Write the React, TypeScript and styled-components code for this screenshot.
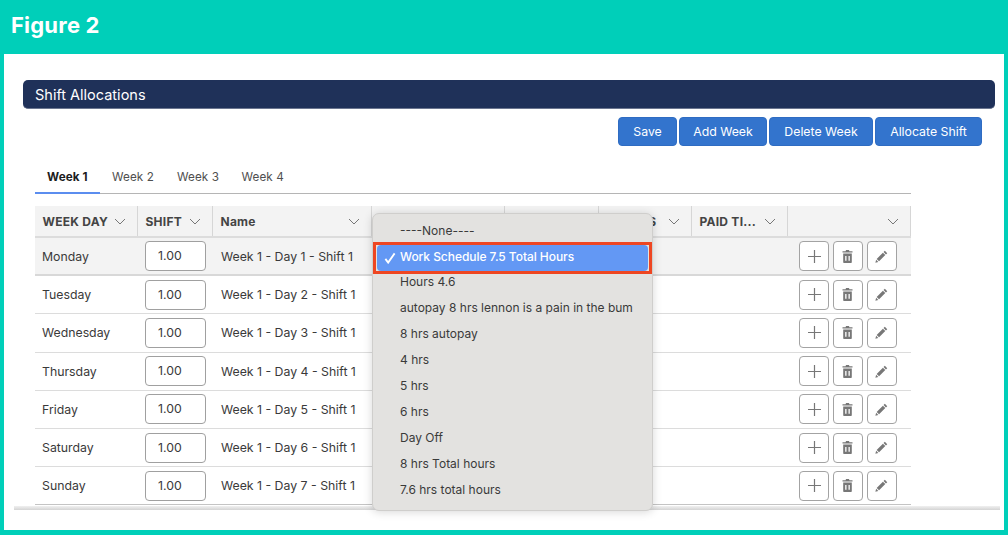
import React from "react";
import styled, { createGlobalStyle } from "styled-components";

const Global = createGlobalStyle`
  html, body { margin: 0; padding: 0; }
  body { background: #00cfb9; font-family: Inter, "Liberation Sans", sans-serif; }
  * { box-sizing: border-box; }
`;
const Page = styled.div`
  width: 1008px; height: 535px; overflow: hidden; background: #00cfb9;
  display: flex; flex-direction: column;
`;
const FigureHeader = styled.h1`
  margin: 0; height: 54px; flex: none; padding: 11px 0 0 11px;
  color: #fff; font: 700 22px/28px Inter, "Liberation Sans", sans-serif; letter-spacing: 0.2px;
`;
const Panel = styled.main`
  position: relative; height: 476px; margin: 0 4px; background: #fff; flex: none;
  padding: 26px 9px 0 19px; display: flex; flex-direction: column;
`;
const TitleBar = styled.div`
  height: 29px; background: #1f3159; border-radius: 5px; border-bottom: 1px solid #6b7690;
  color: #fff; font-size: 14.5px; line-height: 30px; padding-left: 12px; flex: none;
`;
const Actions = styled.div`
  display: flex; gap: 2px; justify-content: flex-end; margin-top: 8px; padding-right: 13px; flex: none;
`;
const ActionButton = styled.button<{ $w: number }>`
  width: ${p => p.$w}px; height: 29px; background: #3374cd; color: #fff; border: 1px solid #2f6cc2;
  border-radius: 4px; font: 400 12.3px Inter, "Liberation Sans", sans-serif; padding: 0;
`;
const Tabs = styled.div`
  margin: 15px 0 0 12px; width: 876px; height: 33px; border-bottom: 1px solid #b5b5b5;
  display: flex; flex: none;
`;
const Tab = styled.div<{ $active?: boolean; $w: number }>`
  width: ${p => p.$w}px; height: 33px; padding: 7.5px 0 0 12px; font-size: 11.7px; line-height: 16px;
  letter-spacing: 0.1px;
  color: ${p => (p.$active ? "#1c1c1c" : "#4f4f4f")}; font-weight: ${p => (p.$active ? 700 : 400)};
  border-bottom: ${p => (p.$active ? "2px solid #5b8def" : "none")};
`;
const Cols = "103px 75px 159px 133px 94px 93px 96px 123px";
const Table = styled.div`
  margin: 12px 0 0 12px; width: 876px; flex: none;
`;
const HeadRow = styled.div`
  display: grid; grid-template-columns: ${Cols}; height: 32px; background: #f3f3f3;
  border-bottom: 2px solid #dcdcdc;
`;
const HeadCell = styled.div`
  display: flex; align-items: center; justify-content: space-between; padding: 0 11px 0 7.5px;
  border-right: 1px solid #d6d6d6; font-size: 12px; font-weight: 700; color: #444; white-space: nowrap;
  letter-spacing: 0.25px;
  svg { flex: none; }
`;
const Row = styled.div<{ $active?: boolean }>`
  display: grid; grid-template-columns: ${Cols}; height: 38.2px; align-items: center;
  background: ${p => (p.$active ? "#f3f3f3" : "#fff")};
  border-bottom: ${p => (p.$active ? "2px solid #d8d8d8" : "1px solid #dcdcdc")};
  font-size: 12.3px; color: #3a3a3a;
  &:last-child { border-bottom-color: #c4c4c4; }
`;
const DayCell = styled.div`
  padding-left: 7px; white-space: nowrap; overflow: hidden;
`;
const NameCell = styled.div`
  padding-left: 8px; white-space: nowrap; overflow: hidden;
`;
const ShiftCell = styled.div`
  padding-left: 7px;
`;
const ShiftInput = styled.div`
  width: 61px; height: 30px; background: #fff; border: 1px solid #a0a0a0; border-radius: 4px;
  font-size: 12.3px; line-height: 28px; padding-left: 12px; color: #3a3a3a;
`;
const IconCell = styled.div`
  display: flex; gap: 3.5px; padding-left: 11px; grid-column: 8;
`;
const IconButton = styled.div`
  width: 30.3px; height: 30px; background: #fff; border: 1px solid #a3a3a3; border-radius: 4px;
  display: flex; align-items: center; justify-content: center;
`;
const BottomLine = styled.div`
  position: absolute; left: 10px; width: 986px; top: 452px; height: 3.5px;
  background: linear-gradient(#f0f0f0, #d4d4d4);
`;
const Popup = styled.div`
  position: absolute; left: 368px; top: 159px; width: 281px; height: 298px; background: #e3e2e0;
  border: 1px solid #cfcecc; border-radius: 7px; box-shadow: 0 1px 10px rgba(0,0,0,.16);
  padding-top: 4px; font-size: 12px; color: #3a3a3a;
`;
const Option = styled.div`
  height: 25.9px; line-height: 25.9px; padding-left: 27px; white-space: nowrap;
`;
const Selected = styled.div`
  position: relative; z-index: 1; height: 32px; width: 279px; margin: -2px 0 -4.5px;
  border: 3px solid #ee4622; padding: 0 1px;
`;
const SelectedInner = styled.div`
  height: 26px; background: #6398f4; border-radius: 4px; color: #fff; font-weight: 500; line-height: 23px;
  padding-left: 23px; white-space: nowrap; letter-spacing: -0.05px;
`;
const Check = styled.svg`
  position: absolute; left: 8px; top: 7.5px;
`;

const Chevron = () => (
  <svg width="12" height="7" viewBox="0 0 12 7" fill="none" stroke="#777" strokeWidth="1">
    <path d="M1 1l5 5 5-5" />
  </svg>
);
const Plus = () => (
  <svg width="13" height="13" viewBox="0 0 13 13" stroke="#777" strokeWidth="1.2">
    <path d="M6.5 0v13M0 6.5h13" />
  </svg>
);
const Trash = () => (
  <svg width="11" height="13" viewBox="0 0 11 13" fill="#777">
    <path d="M4 0h3l.4 1.3h3.1v1.2H.5V1.3h3.1z" />
    <path fillRule="evenodd" d="M1.2 3.5h8.6v8.4c0 .6-.4 1.1-1 1.1H2.2c-.6 0-1-.5-1-1.1zM3.2 6v4.8h1.3V6zm3.3 0v4.8h1.3V6z" />
  </svg>
);
const Pencil = () => (
  <svg width="13" height="13" viewBox="0 0 14 14" fill="#777">
    <path d="M10.6.8l2.6 2.6-1.4 1.4-2.6-2.6zM8.5 2.9l2.6 2.6-6.7 6.7-2.6-2.6zM1.2 10.4l2.4 2.4-3.2.8z" />
  </svg>
);

const days = ["Monday", "Tuesday", "Wednesday", "Thursday", "Friday", "Saturday", "Sunday"];
const heads = ["WEEK DAY", "SHIFT", "Name", "", "", "BREAKS", "PAID TI...", ""];
const options = ["Hours 4.6", "autopay 8 hrs lennon is a pain in the bum", "8 hrs autopay", "4 hrs", "5 hrs", "6 hrs", "Day Off", "8 hrs Total hours", "7.6 hrs total hours"];
const actions: [string, number][] = [["Save", 59], ["Add Week", 88], ["Delete Week", 104], ["Allocate Shift", 107]];
const tabs: [string, number][] = [["Week 1", 65], ["Week 2", 65], ["Week 3", 64.5], ["Week 4", 65]];

export default function App() {
  return (
    <Page>
      <Global />
      <FigureHeader>Figure 2</FigureHeader>
      <Panel>
        <TitleBar>Shift Allocations</TitleBar>
        <Actions>
          {actions.map(([t, w]) => <ActionButton key={t} $w={w}>{t}</ActionButton>)}
        </Actions>
        <Tabs>
          {tabs.map(([t, w], i) => <Tab key={t} $w={w} $active={i === 0}>{t}</Tab>)}
        </Tabs>
        <Table>
          <HeadRow>
            {heads.map((h, i) => <HeadCell key={i}><span>{h}</span><Chevron /></HeadCell>)}
          </HeadRow>
          {days.map((d, i) => (
            <Row key={d} $active={i === 0}>
              <DayCell>{d}</DayCell>
              <ShiftCell><ShiftInput>1.00</ShiftInput></ShiftCell>
              <NameCell>Week 1 - Day {i + 1} - Shift 1</NameCell>
              <IconCell>
                <IconButton><Plus /></IconButton>
                <IconButton><Trash /></IconButton>
                <IconButton><Pencil /></IconButton>
              </IconCell>
            </Row>
          ))}
        </Table>
        <BottomLine />
        <Popup>
          <Option>----None----</Option>
          <Selected>
            <Check width="12" height="12" viewBox="0 0 13 13" fill="none" stroke="#fff" strokeWidth="2">
              <path d="M1.5 7.5l3 4L11.5 1.5" />
            </Check>
            <SelectedInner>Work Schedule 7.5 Total Hours</SelectedInner>
          </Selected>
          {options.map(o => <Option key={o}>{o}</Option>)}
        </Popup>
      </Panel>
    </Page>
  );
}
